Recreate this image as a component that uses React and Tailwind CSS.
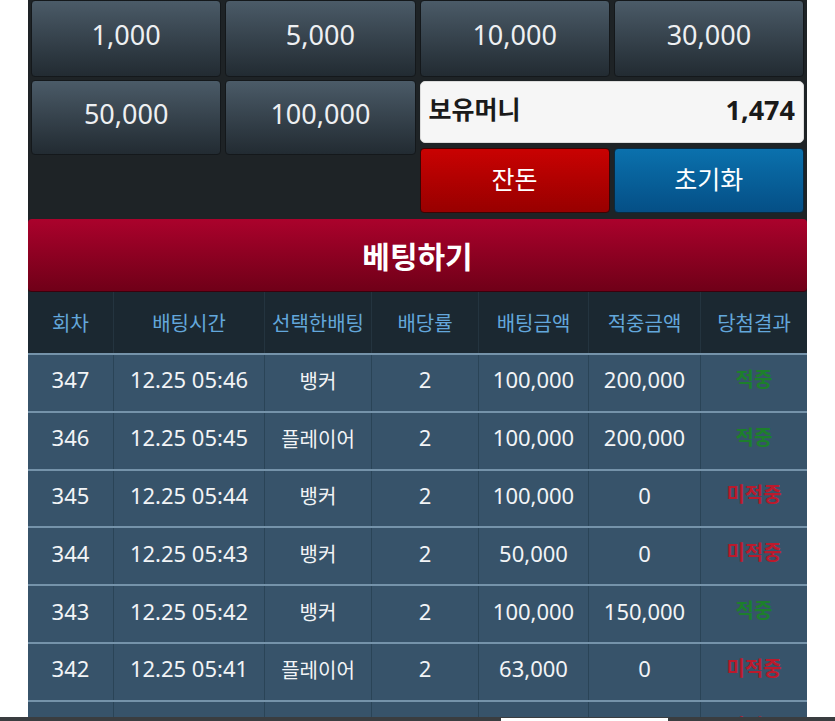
import React from "react";

const chips = ["1,000", "5,000", "10,000", "30,000"];
const cols = ["w-[85px]", "w-[151px]", "w-[107px]", "w-[107px]", "w-[110px]", "w-[112px]", "w-[107px]"];
const headers = ["회차", "배팅시간", "선택한배팅", "배당률", "배팅금액", "적중금액", "당첨결과"];
const rows = [
  ["347", "12.25 05:46", "뱅커", "2", "100,000", "200,000", "적중"],
  ["346", "12.25 05:45", "플레이어", "2", "100,000", "200,000", "적중"],
  ["345", "12.25 05:44", "뱅커", "2", "100,000", "0", "미적중"],
  ["344", "12.25 05:43", "뱅커", "2", "50,000", "0", "미적중"],
  ["343", "12.25 05:42", "뱅커", "2", "100,000", "150,000", "적중"],
  ["342", "12.25 05:41", "플레이어", "2", "63,000", "0", "미적중"],
  ["341", "12.24 14:34", "뱅커", "2", "100,000", "0", "미적중"],
];

function Chip({ label, h }) {
  return (
    <div
      className={`${h} flex items-center justify-center pb-[7px] rounded-[4px] border border-[#14181b] bg-gradient-to-b from-[#4b5b68] to-[#222b32] text-[27px] text-[#eef0f2]`}
    >
      {label}
    </div>
  );
}

export default function App() {
  return (
    <div
      className="w-[835px] h-[721px] bg-white flex flex-col overflow-hidden"
      style={{ fontFamily: '"Noto Sans", "Noto Sans CJK KR", sans-serif' }}
    >
      <div className="h-[717px] overflow-hidden">
        <div className="ml-[28px] w-[779px] bg-[#1e2326]">
          <div className="px-[3px]">
            <div className="grid grid-cols-4 gap-[4px]">
              {chips.map((c) => (
                <Chip key={c} label={c} h="h-[77px]" />
              ))}
            </div>
            <div className="grid grid-cols-2 gap-[4px] mt-[3px]">
              <div className="grid grid-cols-2 gap-[4px] self-start">
                <Chip label="50,000" h="h-[75px]" />
                <Chip label="100,000" h="h-[75px]" />
              </div>
              <div className="flex flex-col pt-[1px]">
                <div className="h-[62px] rounded-[5px] bg-[#f6f6f6] border border-[#dcdcdc] flex items-center justify-between px-[8px] pb-[4px] text-[#1a1a1a] font-bold">
                  <span className="text-[25px]">보유머니</span>
                  <span className="text-[27px]">1,474</span>
                </div>
                <div className="grid grid-cols-2 gap-[4px] mt-[5px]">
                  <div className="h-[65px] rounded-[4px] border border-[#3a0505] bg-gradient-to-b from-[#c90202] to-[#980000] flex items-center justify-center pb-[1px] text-white text-[25px]">
                    잔돈
                  </div>
                  <div className="h-[65px] rounded-[4px] border border-[#0a2a40] bg-gradient-to-b from-[#0b71ad] to-[#054f86] flex items-center justify-center pb-[1px] text-white text-[25px]">
                    초기화
                  </div>
                </div>
              </div>
            </div>
          </div>
          <div className="mt-[6px] h-[73px] rounded-[4px] bg-gradient-to-b from-[#ab022c] to-[#700018] border-b border-[#3b000c] flex items-center justify-center pt-[2px] text-white font-bold text-[30px]">
            베팅하기
          </div>
          <div className="flex h-[61px] bg-[#1b2831]">
            {headers.map((h, i) => (
              <div
                key={h}
                className={`${cols[i]} flex items-center justify-center pt-[2px] text-[20px] text-[#63a7db] ${i > 0 ? "border-l border-[#24343f]" : ""}`}
              >
                {h}
              </div>
            ))}
          </div>
          {rows.map((r, ri) => (
            <div key={ri} className="flex h-[57.8px] bg-[#37536a] border-t-2 border-[#7593aa]">
              {r.map((c, i) => {
                const isResult = i === 6;
                const color = isResult
                  ? c === "적중"
                    ? "text-[#1d7f2c]"
                    : "text-[#bb1a2c]"
                  : "text-[#f2f4f6]";
                return (
                  <div
                    key={i}
                    className={`${cols[i]} flex items-center justify-center pb-[6px] ${isResult ? "text-[20px] font-bold" : i === 2 ? "text-[20px] pt-[4px]" : "text-[22px]"} ${color} ${i > 0 ? "border-l border-[#2a4457]" : ""}`}
                  >
                    {c}
                  </div>
                );
              })}
            </div>
          ))}
        </div>
      </div>
      <div className="h-[4px] bg-[#3a3d40] flex">
        <div className="ml-[501px] w-[167px] h-[3px] mt-[1px] bg-white" />
      </div>
    </div>
  );
}
